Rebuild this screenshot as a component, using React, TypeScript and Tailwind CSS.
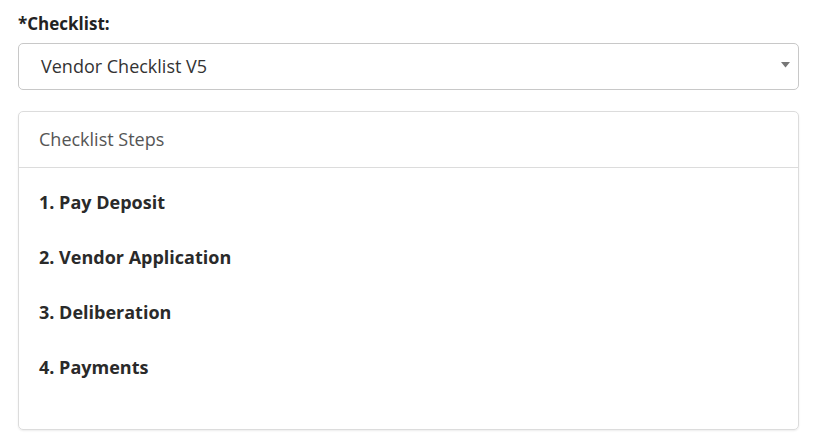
import React from "react";

export default function App() {
  const steps = ["1. Pay Deposit", "2. Vendor Application", "3. Deliberation", "4. Payments"];
  return (
    <div className="w-[815px] h-[441px] bg-white px-[18px] pt-[12px] text-[#333]" style={{ fontFamily: '"Open Sans", "Noto Sans", sans-serif' }}>
      <div className="h-[24px] leading-[24px] text-[17px] font-bold text-[#222] mb-[7px]">*Checklist:</div>
      <div className="relative h-[47px] w-[781px] border border-[#c8c8c8] rounded-[5px] flex items-center pl-[22px] text-[18px] text-[#333]">
        Vendor Checklist V5
        <svg className="absolute right-[8px] top-[18px]" width="9" height="6" viewBox="0 0 9 6">
          <polygon points="0,0 9,0 4.5,5.5" fill="#777" />
        </svg>
      </div>
      <div className="mt-[21px] w-[781px] h-[319px] border border-[#dcdcdc] rounded-[5px] shadow-[0_1px_2px_rgba(0,0,0,0.08)]">
        <div className="h-[56px] border-b border-[#dcdcdc] flex items-center pl-[20px] text-[18px] text-[#555]">Checklist Steps</div>
        <div className="pt-[7px] pl-[20px]">
          {steps.map((s) => (
            <div key={s} className="h-[55px] flex items-center text-[18px] font-bold text-[#2a2a2a]">{s}</div>
          ))}
        </div>
      </div>
    </div>
  );
}
